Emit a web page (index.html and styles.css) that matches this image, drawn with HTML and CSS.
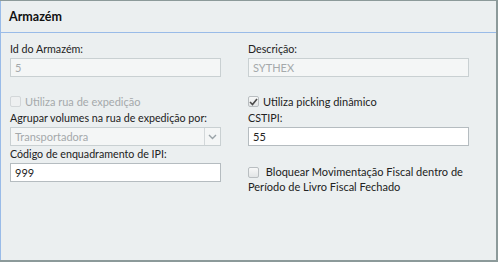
FILE: index.html
```html
<!DOCTYPE html>
<html lang="pt-BR">
<head>
    <meta charset="UTF-8">
    <meta name="viewport" content="width=device-width, initial-scale=1.0">
    <title>Armazém</title>
    <link rel="stylesheet" href="styles.css">
</head>
<body>
    <div class="panel">
        <div class="panel-header">Armazém</div>
        <div class="panel-body">
            <!-- Left column -->
            <div class="column left">
                <label class="field-label">Id do Armazém:</label>
                <div class="text-input disabled">5</div>

                <div class="check-row disabled">
                    <span class="check-box"></span>
                    <span>Utiliza rua de expedição</span>
                </div>

                <label class="field-label">Agrupar volumes na rua de expedição por:</label>
                <div class="select-input disabled">
                    <span class="select-value">Transportadora</span>
                    <span class="select-trigger">
                        <svg width="9" height="6" viewBox="0 0 9 6"><path d="M1 1 L4.5 4.5 L8 1" fill="none" stroke="#9aa3a8" stroke-width="1.4"/></svg>
                    </span>
                </div>

                <label class="field-label">Código de enquadramento de IPI:</label>
                <div class="text-input">999</div>
            </div>

            <!-- Right column -->
            <div class="column right">
                <label class="field-label">Descrição:</label>
                <div class="text-input disabled">SYTHEX</div>

                <div class="check-row">
                    <span class="check-box checked">
                        <svg width="9" height="8" viewBox="0 0 9 8"><path d="M1 4 L3.5 6.5 L8 1" fill="none" stroke="#4a4a4a" stroke-width="1.6"/></svg>
                    </span>
                    <span>Utiliza picking dinâmico</span>
                </div>

                <label class="field-label">CSTIPI:</label>
                <div class="text-input">55</div>

                <div class="check-row multi">
                    <span class="check-box"></span>
                    <span>Bloquear Movimentação Fiscal dentro de Período de Livro Fiscal Fechado</span>
                </div>
            </div>
        </div>
    </div>
</body>
</html>
```

FILE: styles.css
```css
/* Page */
body {
    margin: 0;
    font-family: Lato, "Noto Sans", sans-serif;
    font-size: 10.7px;
    color: #222;
    background: #ebeff0;
}

/* Panel frame */
.panel {
    width: 498px;
    height: 262px;
    box-sizing: border-box;
    background: #ebeff0;
    border-top: 1px solid #8c9a9a;
    border-right: 2px solid #8c9a9a;
    border-bottom: 2px solid #8c9a9a;
    box-shadow: inset 1px 0 0 #99bbe8;
}

.panel-header {
    height: 31px;
    line-height: 31px;
    padding-left: 9px;
    font-weight: bold;
    font-size: 12.5px;
    color: #111;
    border-bottom: 1px solid #99bbe8;
}

.panel-body {
    display: flex;
    gap: 27px;
    padding: 8px 0 0 10px;
}

.column {
    flex: none;
    display: flex;
    flex-direction: column;
}

.column.left {
    width: 211px;
}

.column.right {
    width: 221px;
}

/* Labels */
.field-label {
    display: block;
    height: 15px;
    line-height: 15px;
    margin-bottom: 2px;
    white-space: nowrap;
}

/* Inputs */
.text-input {
    height: 19px;
    line-height: 17px;
    padding: 0 4px;
    background: #fff;
    border: 1px solid #b5bcc0;
    box-sizing: border-box;
    font-size: 11px;
}

.text-input.disabled {
    background: #f4f6f6;
    border-color: #c9d0d2;
    color: #a5a9ab;
}

.select-input {
    display: flex;
    height: 19px;
    background: #f4f6f6;
    border: 1px solid #c9d0d2;
    box-sizing: border-box;
    color: #a5a9ab;
    font-size: 11px;
}

.select-value {
    flex: 1;
    line-height: 17px;
    padding: 0 4px;
}

.select-trigger {
    width: 15px;
    border-left: 1px solid #d3d8da;
    display: flex;
    align-items: center;
    justify-content: center;
}

/* Checkboxes */
.check-row {
    display: flex;
    align-items: center;
    gap: 4px;
    height: 15px;
    margin: 17px 0 1px;
    font-size: 11px;
}

.check-row.disabled {
    color: #a5a9ab;
}

.check-row.multi {
    display: block;
    height: auto;
    margin-top: 18px;
    line-height: 15px;
    padding-right: 6px;
}

.check-row.multi .check-box {
    display: inline-flex;
    vertical-align: -2px;
    margin-right: 4px;
}

.check-box {
    width: 11px;
    height: 11px;
    border: 1px solid #b9bec1;
    border-radius: 2px;
    background: linear-gradient(#f7f8f8, #e2e5e6);
    box-sizing: border-box;
    display: flex;
    align-items: center;
    justify-content: center;
    flex: none;
}

.check-row.disabled .check-box {
    border-color: #d3d7d9;
    background: #eef0f1;
}

.check-box svg {
    display: block;
}
```
